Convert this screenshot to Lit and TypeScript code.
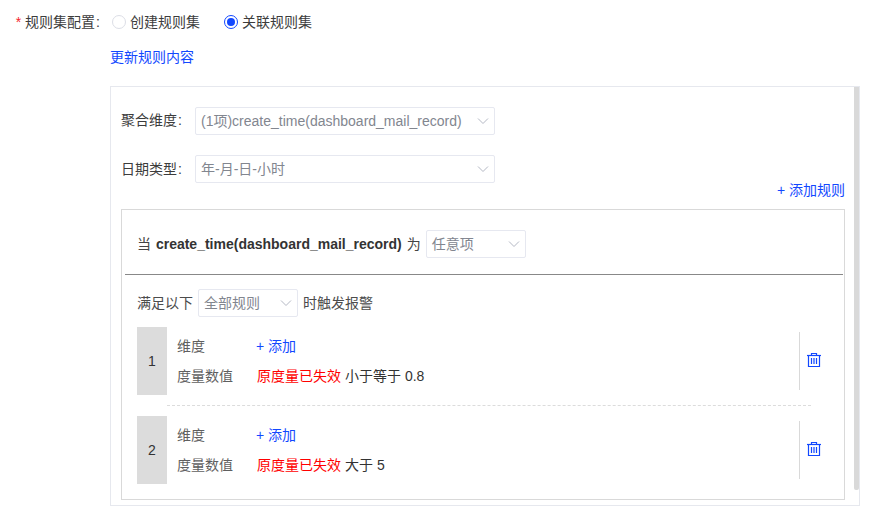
import { LitElement, html, css } from "lit";
import { customElement } from "lit/decorators.js";

const chevron = html`<svg class="chev" width="12" height="12" viewBox="0 0 12 12" fill="none"><path d="M1 3.5 L6 8.5 L11 3.5" stroke="#b4b8c4" stroke-width="1"/></svg>`;
const trash = html`<svg class="trash" width="14" height="15" viewBox="0 0 14 15" fill="none" stroke="#1248ff" stroke-width="1.2">
  <path d="M0 3.5 H14"/><path d="M4.5 3.5 V1.5 H9.5 V3.5"/><path d="M1.5 3.5 V14.5 H12.5 V3.5"/>
  <path d="M4.5 6 V12 M7 6 V12 M9.5 6 V12"/></svg>`;

@customElement("app-root")
export class AppRoot extends LitElement {
  static styles = css`
    :host { display: block; width: 871px; height: 512px; overflow: hidden; background: #fff;
      font-family: "Liberation Sans", "Noto Sans CJK SC", sans-serif; font-size: 14px; color: #333; line-height: 20px; }
    .top { display: flex; align-items: center; height: 20px; margin-top: 12px; }
    .label { width: 100px; text-align: right; white-space: nowrap; color: #3c3c3c; flex: none; }
    .star { color: #f5222d; margin-right: 4px; }
    .colon { margin-left: 1px; }
    .radio { display: flex; align-items: center; gap: 4px; color: #3c3c3c; }
    .radio.a { margin-left: 12px; }
    .radio.b { margin-left: 24px; }
    .dot { width: 14px; height: 14px; box-sizing: border-box; border-radius: 50%; border: 1px solid #dcdee6; flex: none; }
    .dot.on { border-color: #1248ff; display: flex; align-items: center; justify-content: center; }
    .dot.on::after { content: ""; width: 8px; height: 8px; border-radius: 50%; background: #1248ff; }
    .link { color: #1248ff; }
    .update { margin: 15px 0 0 110px; height: 20px; }
    .panel { box-sizing: border-box; margin: 19px 0 0 110px; width: 750px; height: 420px; border: 1px solid #e6e8ee;
      position: relative; padding: 20px 10px 0 10px; }
    .scroll { position: absolute; top: 0; right: 0; width: 5px; height: 403px; background: #d9d9d9; border-radius: 0 0 2px 2px; }
    .line { display: flex; align-items: center; height: 28px; }
    .line + .line { margin-top: 20px; }
    .flabel { width: 74px; flex: none; color: #3c3c3c; }
    .raised { padding-bottom: 2px; }
    .select { box-sizing: border-box; height: 28px; border: 1px solid #e6e8f0; border-radius: 2px; display: flex;
      align-items: center; justify-content: space-between; padding: 0 5px 0 5px; color: #82868f; white-space: nowrap; background: #fff; }
    .w300 { width: 300px; }
    .w100 { width: 100px; }
    .chev { flex: none; }
    .addrule { text-align: right; height: 20px; margin: -3px 4px 0 0; line-height: 20px; }
    .card { box-sizing: border-box; margin-top: 9px; width: 724px; height: 291px; border: 1px solid #d9d9d9; padding: 20px 1px 0 3px; }
    .when { display: flex; align-items: center; height: 28px; padding-left: 12px; color: #444; gap: 5px; }
    .when b { color: #333; margin: 0 1px; }
    .divider { height: 1px; background: #888; margin-top: 16px; }
    .cond { display: flex; align-items: center; height: 28px; margin-top: 14px; padding-left: 12px; gap: 5px; color: #4c4c4c; }
    .rule { display: flex; height: 68px; margin-left: 12px; position: relative; }
    .r1 { margin-top: 10px; }
    .r2 { margin-top: 21px; }
    .r2::before { content: ""; position: absolute; left: 30px; width: 644px; top: -11px; border-top: 1px dashed #dcdcdc; }
    .num { width: 30px; flex: none; background: #dcdcdc; display: flex; align-items: center; justify-content: center; color: #333; }
    .body { flex: 1; padding: 9px 0 0 10px; }
    .kv { display: flex; height: 20px; }
    .kv + .kv { margin-top: 10px; }
    .k { width: 79px; flex: none; color: #5f5f5f; }
    .val { margin-left: 1px; }
    .red { color: #f00; margin-right: 4px; }
    .act { margin: 5px 15px 5px 0; border-left: 1px solid #d9d9d9; flex: none; display: flex; align-items: center; padding-left: 7px; width: 21px; }
    .trash { margin-top: -3px; }
  `;

  rule(n: number, cls: string, cond: string) {
    return html`<div class="rule ${cls}">
      <div class="num">${n}</div>
      <div class="body">
        <div class="kv"><span class="k">维度</span><span class="link">+ 添加</span></div>
        <div class="kv"><span class="k">度量数值</span><span class="val"><span class="red">原度量已失效</span>${cond}</span></div>
      </div>
      <div class="act">${trash}</div>
    </div>`;
  }

  render() {
    return html`
      <div class="top">
        <div class="label"><span class="star">*</span>规则集配置<span class="colon">:</span></div>
        <label class="radio a"><span class="dot"></span>创建规则集</label>
        <label class="radio b"><span class="dot on"></span>关联规则集</label>
      </div>
      <div class="update link">更新规则内容</div>
      <div class="panel">
        <div class="scroll"></div>
        <div class="line"><span class="flabel raised">聚合维度<span class="colon">:</span></span><div class="select w300"><span>(1项)create_time(dashboard_mail_record)</span>${chevron}</div></div>
        <div class="line"><span class="flabel">日期类型<span class="colon">:</span></span><div class="select w300"><span>年-月-日-小时</span>${chevron}</div></div>
        <div class="addrule link">+ 添加规则</div>
        <div class="card">
          <div class="when"><span>当 <b>create_time(dashboard_mail_record)</b> 为</span><div class="select w100"><span>任意项</span>${chevron}</div></div>
          <div class="divider"></div>
          <div class="cond"><span>满足以下</span><div class="select w100"><span>全部规则</span>${chevron}</div><span>时触发报警</span></div>
          ${this.rule(1, "r1", "小于等于 0.8")}
          ${this.rule(2, "r2", "大于 5")}
        </div>
      </div>
    `;
  }
}
